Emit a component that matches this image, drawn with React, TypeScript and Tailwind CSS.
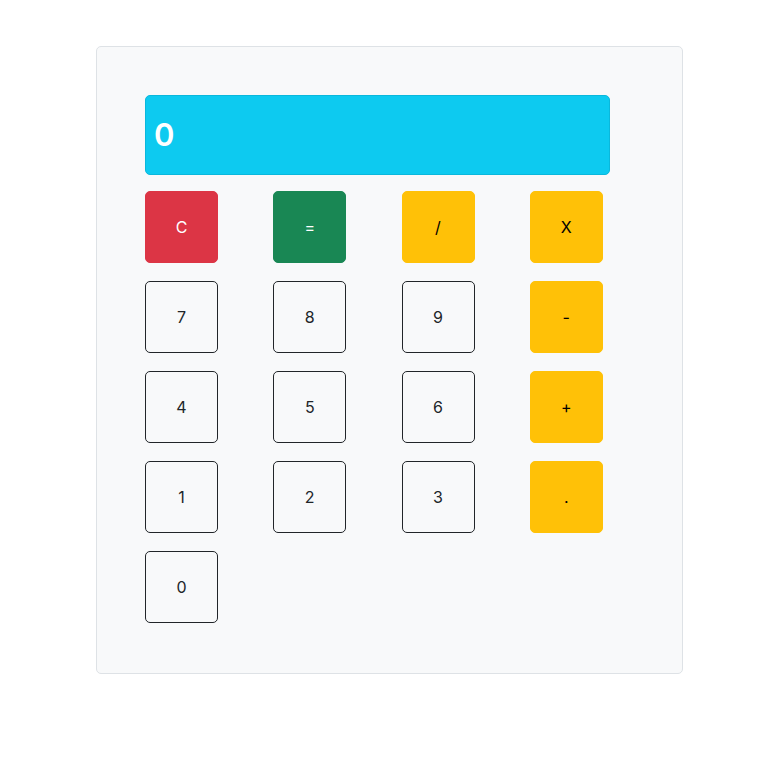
import React, { useState } from 'react';

type Key = { label: string; kind: 'danger' | 'success' | 'warning' | 'outline' };

const keys: Key[] = [
  { label: 'C', kind: 'danger' },
  { label: '=', kind: 'success' },
  { label: '/', kind: 'warning' },
  { label: 'X', kind: 'warning' },
  { label: '7', kind: 'outline' },
  { label: '8', kind: 'outline' },
  { label: '9', kind: 'outline' },
  { label: '-', kind: 'warning' },
  { label: '4', kind: 'outline' },
  { label: '5', kind: 'outline' },
  { label: '6', kind: 'outline' },
  { label: '+', kind: 'warning' },
  { label: '1', kind: 'outline' },
  { label: '2', kind: 'outline' },
  { label: '3', kind: 'outline' },
  { label: '.', kind: 'warning' },
  { label: '0', kind: 'outline' }
];

const kindClass = {
  danger: 'bg-[#dc3545] text-white border-[#dc3545]',
  success: 'bg-[#198754] text-white border-[#198754]',
  warning: 'bg-[#ffc107] text-black border-[#ffc107]',
  outline: 'bg-transparent text-[#212529] border-[#212529]'
};

const App = () => {
  const [display, setDisplay] = useState('0');

  const press = (label: string) => {
    if (label === 'C') {
      setDisplay('0');
    } else if (label === '=') {
      try {
        const result = Function(`return (${display.replace(/X/g, '*')})`)();
        setDisplay(String(result));
      } catch {
        setDisplay('0');
      }
    } else {
      setDisplay(display === '0' ? label : display + label);
    }
  };

  return (
    <div className="min-h-screen bg-white pt-[46px] font-['Inter',sans-serif]">
      <div className="ml-[96px] h-[628px] w-[587px] rounded-[5px] border border-[#dee2e6] bg-[#f8f9fa] p-12">
        <div className="flex h-[80px] w-[465px] items-center rounded-[5px] border border-[#0ab8dc] bg-[#0dcaf0] px-2 text-[31px] font-semibold text-white">
          {display}
        </div>
        <div className="mt-4 grid w-[513px] grid-cols-4 gap-y-[18px]">
          {keys.map(key => (
            <button
              key={key.label}
              onClick={() => press(key.label)}
              className={`flex h-[72px] w-[73px] items-center justify-center rounded-[5px] border text-base ${kindClass[key.kind]}`}
            >
              {key.label}
            </button>
          ))}
        </div>
      </div>
    </div>
  );
};

export default App;
